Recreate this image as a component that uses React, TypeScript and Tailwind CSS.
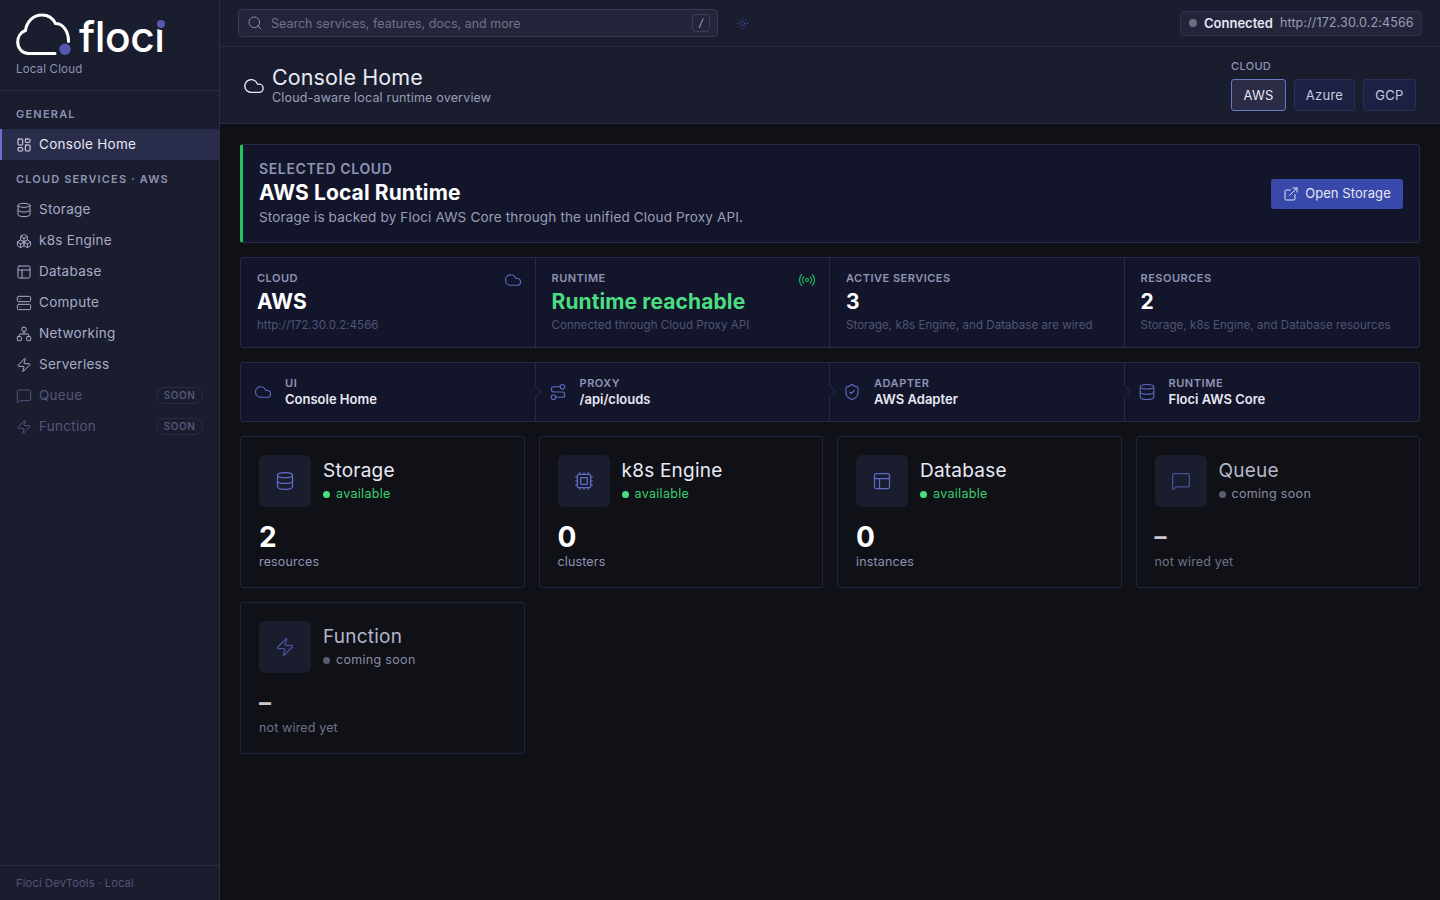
import {
  LayoutDashboard,
  Database,
  Boxes,
  PanelsTopLeft,
  Server,
  Network,
  Zap,
  MessageSquare,
  Search,
  Sun,
  Cloud,
  ExternalLink,
  Radio,
  Route,
  ShieldCheck,
  Cpu,
} from 'lucide-react';

const navItems = [
  { label: 'Storage', icon: Database },
  { label: 'k8s Engine', icon: Boxes },
  { label: 'Database', icon: PanelsTopLeft },
  { label: 'Compute', icon: Server },
  { label: 'Networking', icon: Network },
  { label: 'Serverless', icon: Zap },
];

const soonItems = [
  { label: 'Queue', icon: MessageSquare },
  { label: 'Function', icon: Zap },
];

const metrics = [
  { label: 'CLOUD', value: 'AWS', note: 'http://172.30.0.2:4566', icon: Cloud },
  { label: 'RUNTIME', value: 'Runtime reachable', note: 'Connected through Cloud Proxy API', icon: Radio, ok: true },
  { label: 'ACTIVE SERVICES', value: '3', note: 'Storage, k8s Engine, and Database are wired' },
  { label: 'RESOURCES', value: '2', note: 'Storage, k8s Engine, and Database resources' },
];

const flow = [
  { label: 'UI', value: 'Console Home', icon: Cloud },
  { label: 'PROXY', value: '/api/clouds', icon: Route },
  { label: 'ADAPTER', value: 'AWS Adapter', icon: ShieldCheck },
  { label: 'RUNTIME', value: 'Floci AWS Core', icon: Database },
];

const services = [
  { name: 'Storage', icon: Database, count: '2', unit: 'resources', live: true },
  { name: 'k8s Engine', icon: Cpu, count: '0', unit: 'clusters', live: true },
  { name: 'Database', icon: PanelsTopLeft, count: '0', unit: 'instances', live: true },
  { name: 'Queue', icon: MessageSquare, count: '–', unit: 'not wired yet', live: false },
  { name: 'Function', icon: Zap, count: '–', unit: 'not wired yet', live: false },
];

function Sidebar() {
  return (
    <aside className="w-[220px] shrink-0 h-full flex flex-col bg-[#1a1d2e] border-r border-[#2a2d45]">
      <div className="h-[91px] shrink-0 border-b border-[#2a2d45] px-4 pt-[13px]">
        <div className="flex items-center h-[44px]">
          <svg width="56" height="44" viewBox="0 0 56 44" fill="none" className="shrink-0">
            <path
              d="M39 40.5 L12.5 40.5 C6.5 40.5 1.7 35.5 1.7 29 C1.7 23.5 5 19 9.5 17.5 C10.5 9 17 2 26 2 C32 2 37 5.5 39.5 10.5 C47 10.5 52.5 18 52.5 28.5"
              stroke="#ffffff"
              strokeWidth="3"
              strokeLinecap="round"
            />
            <circle cx="49" cy="36.3" r="5.7" fill="#5558b0" />
          </svg>
          <div className="relative ml-[7px] mt-[4px] text-[42.5px] leading-[44px] font-medium text-white tracking-[-0.01em]">
            floci
            <span className="absolute right-[0px] top-[5px] w-[8px] h-[8px] rounded-full bg-[#5558b0] shadow-[0_0_0_2px_#1a1d2e]" />
          </div>
        </div>
        <div className="text-[11.5px] leading-4 text-[#8f93b5] tracking-[0.015em] mt-[4px]">Local Cloud</div>
      </div>

      <div className="flex-1">
        <div className="h-[38px] pt-[8px] px-4 flex items-center text-[11px] font-semibold tracking-[0.11em] text-[#8f93b5]">GENERAL</div>
        <div className="relative h-[31px] flex items-center gap-[7px] pl-4 bg-[#2a2c4c] text-[#e6e7f3] text-[13.5px] tracking-[0.02em]">
          <span className="absolute left-0 top-0 bottom-0 w-[2px] bg-[#6b70d0]" />
          <LayoutDashboard className="w-4 h-4" strokeWidth={1.5} />
          <span>Console Home</span>
        </div>
        <div className="h-[34px] pt-[4px] px-4 flex items-center text-[11px] font-semibold tracking-[0.105em] text-[#8f93b5]">CLOUD SERVICES · AWS</div>
        {navItems.map((item) => (
          <div key={item.label} className="h-[31px] flex items-center gap-[7px] pl-4 text-[#a8abc7] text-[13.5px] tracking-[0.02em]">
            <item.icon className="w-4 h-4" strokeWidth={1.5} />
            <span>{item.label}</span>
          </div>
        ))}
        {soonItems.map((item) => (
          <div key={item.label} className="h-[31px] flex items-center gap-[7px] pl-4 pr-4 text-[#53567a] text-[13.5px] tracking-[0.02em]">
            <item.icon className="w-4 h-4" strokeWidth={1.5} />
            <span className="flex-1">{item.label}</span>
            <span className="h-[17px] w-[47px] flex items-center justify-center rounded-full border border-[#2a2d45] text-[10px] font-semibold tracking-[0.05em] text-[#53567a]">SOON</span>
          </div>
        ))}
      </div>

      <div className="h-[35px] shrink-0 border-t border-[#2a2d45] px-4 flex items-center text-[11px] text-[#53567a] tracking-[0.02em]">
        Floci DevTools · Local
      </div>
    </aside>
  );
}

function Topbar() {
  return (
    <div className="h-[47px] shrink-0 flex items-center bg-[#1a1d2e] border-b border-[#252a4a] pl-[18px] pr-[18px]">
      <div className="w-[480px] h-[28px] flex items-center rounded-[4px] bg-[#23263a] border border-[#383b50] pl-[8px] pr-[7px]">
        <Search className="w-4 h-4 text-[#8a8da3]" strokeWidth={1.5} />
        <span className="ml-[8px] pt-[2px] flex-1 text-[12.5px] text-[#6f7288]">Search services, features, docs, and more</span>
        <span className="w-[18px] h-[18px] flex items-center justify-center rounded-[4px] border border-[#3d405a] text-[11px] italic text-[#a8abc7]">/</span>
      </div>
      <Sun className="ml-[18px] w-[13px] h-[13px] text-[#3f4590]" strokeWidth={1.75} />
      <div className="ml-auto h-[25px] w-[242px] flex items-center rounded-[4px] bg-[#23263a] border border-[#2e3150] pl-[8px]">
        <span className="w-2 h-2 shrink-0 rounded-full bg-[#6b7080]" />
        <span className="ml-[7px] pt-px text-[13px] font-semibold text-[#e6e7f3]">Connected</span>
        <span className="ml-[7px] pt-px text-[12.5px] text-[#9a9db5] tracking-[0.011em]">http://172.30.0.2:4566</span>
      </div>
    </div>
  );
}

function PageHeader() {
  return (
    <div className="h-[77px] shrink-0 flex bg-[#1a1d2e] border-b border-[#2a2d45] pl-[23px] pr-[24px]">
      <Cloud className="mt-[28px] w-[22px] h-[22px] text-[#e8e9f5]" strokeWidth={1.5} />
      <div className="ml-[7px] pt-[17px]">
        <div className="text-[21.5px] leading-[26px] text-[#e8e9f5] tracking-[0.005em]">Console Home</div>
        <div className="text-[12.5px] leading-[15px] text-[#9a9db8] tracking-[0.014em]">Cloud-aware local runtime overview</div>
      </div>
      <div className="ml-auto pt-[12px]">
        <div className="text-[11px] leading-[14px] font-medium text-[#8f93b5] tracking-[0.03em]">CLOUD</div>
        <div className="mt-[6px] flex gap-2">
          <button className="w-[55px] h-[32px] pt-px rounded-[3px] bg-[#2a2d45] border border-[#6b78c4] text-[13px] text-[#e6e7f3] tracking-[0.02em]">AWS</button>
          <button className="w-[61px] h-[32px] pt-px rounded-[3px] bg-[#1c2042] border border-[#2a2f55] text-[13px] text-[#c8cae0] tracking-[0.02em]">Azure</button>
          <button className="w-[53px] h-[32px] pt-px rounded-[3px] bg-[#1c2042] border border-[#2a2f55] text-[13px] text-[#c8cae0] tracking-[0.02em]">GCP</button>
        </div>
      </div>
    </div>
  );
}

function Hero() {
  return (
    <div className="h-[99px] flex items-center rounded-[3px] bg-[#13162b] border border-[#252a4a] border-l-[3px] border-l-[#22c55e] pl-[16px] pr-[16px]">
      <div className="flex-1 pb-[2px]">
        <div className="text-[14px] leading-[18px] font-semibold text-[#8f93b5] tracking-[0.045em]">SELECTED CLOUD</div>
        <div className="mt-[1px] text-[21px] leading-[28px] font-bold text-white tracking-[0.005em]">AWS Local Runtime</div>
        <div className="mt-[1px] text-[13.5px] leading-[18px] text-[#9a9db8] tracking-[0.012em]">Storage is backed by Floci AWS Core through the unified Cloud Proxy API.</div>
      </div>
      <button className="w-[132px] h-[30px] flex items-center justify-center gap-[6px] rounded-[3px] bg-[#3949ab] text-[13px] text-[#e6e7f3] tracking-[0.005em]">
        <ExternalLink className="w-4 h-4" strokeWidth={1.5} />
        Open Storage
      </button>
    </div>
  );
}

function Metrics() {
  return (
    <div className="mt-[14px] h-[91px] grid grid-cols-4 rounded-[3px] bg-[#13162b] border border-[#252a4a]">
      {metrics.map((m, i) => (
        <div key={m.label} className={`relative pl-[16px] pt-[13px] ${i < 3 ? 'border-r border-[#252a4a]' : ''}`}>
          <div className="text-[11px] leading-[14px] font-semibold text-[#8f93b5] tracking-[0.045em]">{m.label}</div>
          <div className={`mt-[3px] text-[21px] leading-[28px] font-bold tracking-[0.005em] ${m.ok ? 'text-[#4ade80]' : 'text-white'}`}>{m.value}</div>
          <div className="mt-[1px] text-[11.5px] leading-[16px] text-[#4f5478] tracking-[0.005em]">{m.note}</div>
          {m.icon && (
            <m.icon className={`absolute right-[13px] top-[13px] w-[18px] h-[18px] ${m.ok ? 'text-[#22c55e]' : 'text-[#5c6bc0]'}`} strokeWidth={1.5} />
          )}
        </div>
      ))}
    </div>
  );
}

function Flow() {
  return (
    <div className="mt-[14px] h-[60px] grid grid-cols-4 rounded-[3px] bg-[#13162b] border border-[#252a4a]">
      {flow.map((f, i) => (
        <div key={f.label + i} className={`relative flex items-center pl-[13px] ${i < 3 ? 'border-r border-[#252a4a]' : ''}`}>
          {i < 3 && (
            <span className="absolute -right-[5px] top-[24px] w-[9px] h-[9px] rotate-45 bg-[#13162b] border-t border-r border-[#252a4a]" />
          )}
          <f.icon className="w-[18px] h-[18px] text-[#5c6bc0] shrink-0" strokeWidth={1.5} />
          <div className="ml-[13px]">
            <div className="text-[11px] leading-[15px] font-semibold text-[#8f93b5] tracking-[0.05em]">{f.label}</div>
            <div className="text-[13px] leading-[17px] font-semibold text-[#e8e9f5]">{f.value}</div>
          </div>
        </div>
      ))}
    </div>
  );
}

function ServiceCard({ service }: { service: (typeof services)[number] }) {
  const Icon = service.icon;
  return (
    <div className="h-[152px] rounded-[3px] border border-[#1f2340] bg-[#0f1117] pl-[18px] pt-[18px]">
      <div className="flex">
        <div className="w-[52px] h-[52px] flex items-center justify-center rounded-[6px] bg-[#1a1d2e]">
          <Icon className={`w-5 h-5 ${service.live ? 'text-[#5f6bc8]' : 'text-[#4a4f9a]'}`} strokeWidth={1.5} />
        </div>
        <div className="ml-[12px] pt-[3px]">
          <div className={`text-[19px] leading-[26px] tracking-[0.012em] ${service.live ? 'text-[#e8e9f5]' : 'text-[#b4b6c8]'}`}>{service.name}</div>
          <div className="flex items-center h-[20px]">
            <span className={`w-[7px] h-[7px] rounded-full ${service.live ? 'bg-[#4ade80]' : 'bg-[#5a5d70]'}`} />
            <span className={`ml-[6px] text-[12.5px] tracking-[0.025em] ${service.live ? 'text-[#3ecf70]' : 'text-[#8a8da3]'}`}>{service.live ? 'available' : 'coming soon'}</span>
          </div>
        </div>
      </div>
      <div className={`mt-[14px] leading-[32px] font-bold ${service.live ? 'text-[28px] text-white' : 'text-[24px] text-[#c8c9d4]'}`}>{service.count}</div>
      <div className={`text-[12.5px] leading-[18px] tracking-[0.012em] ${service.live ? 'text-[#8f93b5]' : 'text-[#6f7288]'}`}>{service.unit}</div>
    </div>
  );
}

export default function App() {
  return (
    <div className="w-[1440px] h-[900px] flex overflow-hidden bg-[#0f1117] font-['Inter',sans-serif]">
      <Sidebar />
      <main className="flex-1 flex flex-col min-w-0">
        <Topbar />
        <PageHeader />
        <div className="flex-1 pt-[20px] pl-[20px] pr-[20px]">
          <Hero />
          <Metrics />
          <Flow />
          <div className="mt-[14px] grid grid-cols-4 gap-[14px]">
            {services.map((s) => (
              <ServiceCard key={s.name} service={s} />
            ))}
          </div>
        </div>
      </main>
    </div>
  );
}
